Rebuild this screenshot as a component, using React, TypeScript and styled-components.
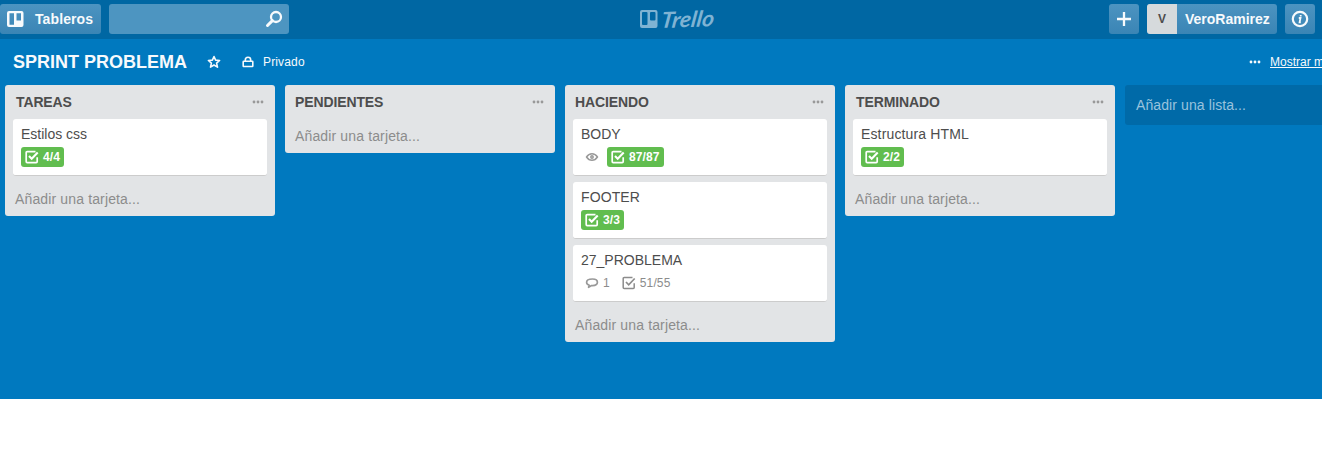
import React from 'react';
import styled, { createGlobalStyle, css } from 'styled-components';

const GlobalStyle = createGlobalStyle`
  *, *::before, *::after { box-sizing: border-box; }
  body {
    margin: 0;
    background: #fff;
    color: #4d4d4d;
    font: 14px/18px "Liberation Sans", Arial, sans-serif;
    overflow: hidden;
  }
  svg { flex: none; }
`;

const Page = styled.div`
  width: 100%;
  height: 399px;
  background: #0079bf;
  overflow: hidden;
`;

const TopBar = styled.header`
  display: grid;
  grid-template-columns: 639px 1fr auto;
  align-items: start;
  height: 39px;
  padding: 4px 7px 0 0;
  background: #0067a3;
`;

const BarGroup = styled.div`
  display: flex;
  gap: 8px;
`;

const barSurface = css`
  height: 30px;
  border: 0;
  border-radius: 3px;
  background: linear-gradient(#4c94c1, #3a85b5);
  color: #f7fafc;
  font: bold 14px/30px "Liberation Sans", Arial, sans-serif;
`;

const BoardsButton = styled.button`
  ${barSurface}
  display: flex;
  align-items: center;
  gap: 11px;
  width: 101px;
  padding: 0 0 0 7px;
  letter-spacing: 0.1px;
`;

const IconButton = styled.button`
  ${barSurface}
  display: grid;
  place-items: center;
  width: 30px;
  padding: 0;
`;

const Search = styled.div`
  ${barSurface}
  display: flex;
  align-items: center;
  justify-content: flex-end;
  width: 180px;
  padding-right: 6px;
  background: #4d95c1;
`;

const Member = styled.button`
  ${barSurface}
  display: flex;
  width: 130px;
  padding: 0;
  overflow: hidden;
`;

const Avatar = styled.span`
  width: 30px;
  background: #d6dadc;
  color: #4d4d4d;
  font-size: 12px;
  text-align: center;
`;

const MemberName = styled.span`
  padding-left: 8px;
`;

const Logo = styled.svg`
  display: block;
`;

const BoardHeader = styled.div`
  display: flex;
  align-items: center;
  height: 46px;
  padding-left: 13px;
  color: #f7fafc;
  font-size: 12px;
  white-space: nowrap;
`;

const BoardTitle = styled.h1`
  width: 194px;
  margin: 0;
  font-size: 18px;
  line-height: 24px;
`;

const Privacy = styled.span`
  display: flex;
  align-items: center;
  gap: 9px;
  margin-left: 21px;
  letter-spacing: 0.15px;
`;

const ShowMenu = styled.span`
  display: flex;
  flex: 0 0 73px;
  align-items: center;
  gap: 9px;
  min-width: 0;
  margin-left: auto;
`;

const MenuLink = styled.a`
  text-decoration: underline;
`;

const Lists = styled.main`
  display: flex;
  align-items: flex-start;
  gap: 10px;
  padding-left: 5px;
`;

const List = styled.section`
  flex: 0 0 270px;
  padding: 0 8px;
  border-radius: 3px;
  background: #e2e4e6;
`;

const ListHeader = styled.div`
  display: flex;
  align-items: center;
  justify-content: space-between;
  height: 34px;
  padding: 0 3px 0 2px;
  color: #999;
`;

const ListTitle = styled.h2<{ $inset?: number }>`
  margin: 0;
  padding-left: ${p => p.$inset ?? 0}px;
  font-size: 14px;
  line-height: 18px;
  letter-spacing: -0.12px;
  color: #4d4d4d;
`;

const Card = styled.article`
  height: 57px;
  margin-bottom: 6px;
  padding: 6px 8px 0;
  border-bottom: 1px solid #ccc;
  border-radius: 3px;
  background: #fff;
`;

const CardTitle = styled.div<{ $tracking?: number }>`
  height: 22px;
  line-height: 18px;
  letter-spacing: ${p => p.$tracking ?? 0}px;
`;

const Badges = styled.div`
  display: flex;
  gap: 4px;
`;

const Badge = styled.span<{ $done?: boolean }>`
  display: flex;
  align-items: center;
  gap: 4px;
  height: 20px;
  padding: 0 4px;
  border-radius: 3px;
  color: ${p => (p.$done ? '#fff' : '#8c8c8c')};
  background: ${p => (p.$done ? '#61bd4f' : 'transparent')};
  font-size: 12px;
  font-weight: ${p => (p.$done ? 'bold' : 'normal')};
  line-height: 20px;
  letter-spacing: 0.12px;
`;

const AddCard = styled.div`
  height: 34px;
  padding-left: 2px;
  color: #8c8c8c;
  line-height: 34px;
  letter-spacing: 0.14px;
`;

const AddList = styled.div`
  flex: 0 0 270px;
  height: 40px;
  padding-left: 11px;
  border-radius: 3px;
  background: #006aa8;
  color: #99c3dd;
  line-height: 40px;
  letter-spacing: 0.1px;
`;

const BoardIcon = () => (
  <svg width="17" height="16" viewBox="0 0 17 16">
    <path fill="currentColor" fillRule="evenodd" d="M2 0h12.500a2 2 0 0 1 2 2v12a2 2 0 0 1-2 2H2a2 2 0 0 1-2-2V2a2 2 0 0 1 2-2Zm.5 2.200v11.600H7V2.200Zm7 0v7.300H14V2.200Z" />
  </svg>
);

const SearchIcon = () => (
  <svg width="18" height="18" viewBox="0 0 18 18" fill="none" stroke="currentColor">
    <circle cx="11" cy="7" r="5" strokeWidth="2.300" />
    <path d="m7.400 10.600-4.900 4.900" strokeWidth="3" strokeLinecap="round" />
  </svg>
);

const PlusIcon = () => (
  <svg width="16" height="16" viewBox="0 0 16 16">
    <path d="M8 1v14M1 8h14" stroke="currentColor" strokeWidth="2.300" />
  </svg>
);

const InfoIcon = () => (
  <svg width="18" height="18" viewBox="0 0 18 18" fill="none" stroke="currentColor">
    <circle cx="9" cy="9" r="7.200" strokeWidth="2.200" />
    <path d="M7.800 8h1.700l-.9 4.300h1.200M9.700 5v1.600" strokeWidth="1.800" />
  </svg>
);

const StarIcon = () => (
  <svg width="14" height="14" viewBox="0 0 14 14">
    <path d="m7 1.500 1.600 3.600 4 .4-3 2.600.9 4L7 10l-3.500 2.100.9-4-3-2.600 4-.4Z" fill="none" stroke="currentColor" strokeWidth="1.600" strokeLinejoin="round" />
  </svg>
);

const LockIcon = () => (
  <svg width="12" height="12" viewBox="0 0 12 12" fill="none" stroke="currentColor" strokeWidth="1.600">
    <rect x="1.200" y="5.200" width="9.600" height="5.300" rx=".6" />
    <path d="M3.300 5V4a2.700 2.700 0 0 1 5.400 0v1" />
  </svg>
);

const DotsIcon = () => (
  <svg width="12" height="4" viewBox="0 0 12 4" fill="currentColor">
    <circle cx="2" cy="2" r="1.400" />
    <circle cx="6" cy="2" r="1.400" />
    <circle cx="10" cy="2" r="1.400" />
  </svg>
);

const CheckIcon = ({ bold }: { bold?: boolean }) => (
  <svg width="14" height="14" viewBox="0 0 14 14" fill="none" stroke="currentColor" strokeWidth={bold ? 1.7 : 1.5}>
    <path d="M10.500 1.600H2.200a1 1 0 0 0-1 1v9a1 1 0 0 0 1 1h9a1 1 0 0 0 1-1V7.200" />
    <path d="m4 6 2.700 2.800 6-6.300" strokeWidth={bold ? 2.1 : 1.7} />
  </svg>
);

const EyeIcon = () => (
  <svg width="14" height="14" viewBox="0 0 14 14" fill="none" stroke="#999">
    <path d="M1.500 7C3 4.700 4.800 3.800 7 3.800S11 4.700 12.500 7C11 9.300 9.200 10.200 7 10.200S3 9.300 1.500 7Z" strokeWidth="1.400" />
    <circle cx="7" cy="7" r="1.200" strokeWidth="1.500" />
  </svg>
);

const CommentIcon = () => (
  <svg width="14" height="14" viewBox="0 0 14 14">
    <path d="M7.500 3c3 0 4.900 1.200 4.900 3.300s-1.900 3.300-4.900 3.300h-.9L3.600 11.300l.4-2.200C2.400 8.600 1.600 7.600 1.600 6.300 1.600 4.200 4 3 7.500 3Z" fill="none" stroke="#999" strokeWidth="1.700" strokeLinejoin="round" />
  </svg>
);

const TrelloLogo = () => (
  <Logo width="80" height="30" viewBox="0 0 80 30" fill="#7fb3d3">
    <path fillRule="evenodd" d="M3 6h13.500a2 2 0 0 1 2 2v14a2 2 0 0 1-2 2H3a2 2 0 0 1-2-2V8a2 2 0 0 1 2-2Zm1 2a1 1 0 0 0-1 1v11a1 1 0 0 0 1 1h3.500a1 1 0 0 0 1-1V9a1 1 0 0 0-1-1Zm8 0a1 1 0 0 0-1 1v6.500a1 1 0 0 0 1 1h3.500a1 1 0 0 0 1-1V9a1 1 0 0 0-1-1Z" />
    <text x="22" y="24" transform="rotate(-2 22 24) skewX(-10) translate(3.500 0)" fontFamily="Lato, sans-serif" fontSize="22" fontWeight="700" fontStyle="italic" textLength="53" lengthAdjust="spacingAndGlyphs">Trello</text>
  </Logo>
);

type CardData = { title: string; tracking?: number; tasks: string; done?: boolean; watched?: boolean; comments?: number };

const lists: { title: string; inset?: number; cards: CardData[] }[] = [
  { title: 'TAREAS', inset: 1, cards: [{ title: 'Estilos css', tasks: '4/4', done: true }] },
  { title: 'PENDIENTES', cards: [] },
  {
    title: 'HACIENDO',
    cards: [
      { title: 'BODY', tasks: '87/87', done: true, watched: true },
      { title: 'FOOTER', tracking: 0.1, tasks: '3/3', done: true },
      { title: '27_PROBLEMA', tasks: '51/55', comments: 1 },
    ],
  },
  { title: 'TERMINADO', inset: 1, cards: [{ title: 'Estructura HTML', tracking: 0.14, tasks: '2/2', done: true }] },
];

export default function App() {
  return (
    <>
      <GlobalStyle />
      <Page>
        <TopBar>
          <BarGroup>
            <BoardsButton><BoardIcon />Tableros</BoardsButton>
            <Search><SearchIcon /></Search>
          </BarGroup>
          <TrelloLogo />
          <BarGroup>
            <IconButton><PlusIcon /></IconButton>
            <Member><Avatar>V</Avatar><MemberName>VeroRamirez</MemberName></Member>
            <IconButton><InfoIcon /></IconButton>
          </BarGroup>
        </TopBar>
        <BoardHeader>
          <BoardTitle>SPRINT PROBLEMA</BoardTitle>
          <StarIcon />
          <Privacy><LockIcon />Privado</Privacy>
          <ShowMenu><DotsIcon /><MenuLink>Mostrar menú</MenuLink></ShowMenu>
        </BoardHeader>
        <Lists>
          {lists.map(list => (
            <List key={list.title}>
              <ListHeader>
                <ListTitle $inset={list.inset}>{list.title}</ListTitle>
                <DotsIcon />
              </ListHeader>
              {list.cards.map(card => (
                <Card key={card.title}>
                  <CardTitle $tracking={card.tracking}>{card.title}</CardTitle>
                  <Badges>
                    {card.watched && <Badge><EyeIcon /></Badge>}
                    {card.comments && <Badge><CommentIcon />{card.comments}</Badge>}
                    <Badge $done={card.done}><CheckIcon bold={card.done} />{card.tasks}</Badge>
                  </Badges>
                </Card>
              ))}
              <AddCard>Añadir una tarjeta...</AddCard>
            </List>
          ))}
          <AddList>Añadir una lista...</AddList>
        </Lists>
      </Page>
    </>
  );
}
